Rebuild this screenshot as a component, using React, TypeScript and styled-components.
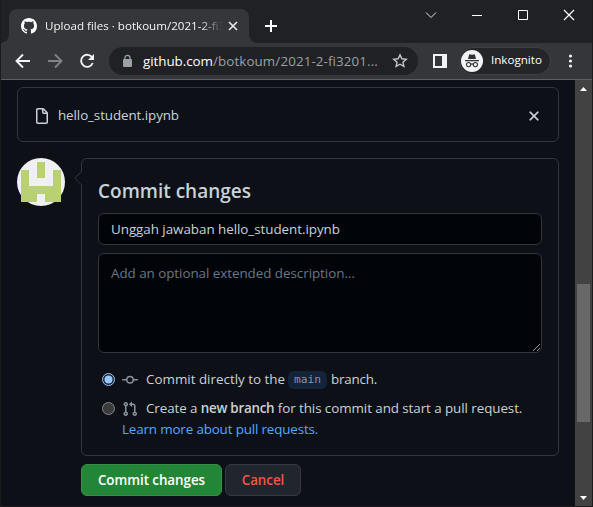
import React from 'react';
import styled, { createGlobalStyle } from 'styled-components';

const GlobalStyle = createGlobalStyle`
  *, *::before, *::after { box-sizing: border-box; }
  body { margin: 0; overflow: hidden; background: #0d1117; font-family: "Open Sans", "Noto Sans", sans-serif; }
`;

const Window = styled.div`
  width: 593px;
  height: 507px;
  display: flex;
  flex-direction: column;
  border: 1px solid #1b1b1b;
  border-top: 0;
  background: #0d1117;
  overflow: hidden;
`;

const Glyph = styled.svg`
  display: block;
  flex: none;
`;

const Label = styled.span<{ $track?: number; $bold?: boolean; $color?: string }>`
  white-space: pre;
  letter-spacing: ${p => p.$track ?? 0}px;
  font-weight: ${p => (p.$bold ? 600 : 400)};
  color: ${p => p.$color ?? 'inherit'};
`;

/* ---------- Browser chrome ---------- */

const TabStrip = styled.div`
  height: 43px;
  flex: none;
  display: flex;
  padding: 9px 0 0 8px;
  background: #202124;
`;

const Tab = styled.div`
  position: relative;
  width: 240px;
  height: 34px;
  display: flex;
  align-items: center;
  padding: 0 9px 0 12px;
  border-radius: 8px 8px 0 0;
  background: #35363a;

  &::before, &::after {
    content: '';
    position: absolute;
    bottom: 0;
    width: 8px;
    height: 8px;
  }
  &::before { left: -8px; background: radial-gradient(circle at 0 0, transparent 7.5px, #35363a 8px); }
  &::after { right: -8px; background: radial-gradient(circle at 100% 0, transparent 7.5px, #35363a 8px); }
`;

const TabTitle = styled.div`
  width: 181px;
  margin: 0 0 0 8px;
  white-space: nowrap;
  font-size: 11.6px;
  line-height: 20px;
  color: #f1f3f4;
  mask-image: linear-gradient(to right, #000 155px, transparent 178px);
`;

const NewTab = styled.div`
  margin: 11px 0 0 16px;
`;

const WindowControls = styled.div`
  display: flex;
  gap: 34px;
  margin: -1px 17px 0 auto;
`;

const Toolbar = styled.div`
  height: 37px;
  flex: none;
  display: flex;
  align-items: center;
  padding: 0 12px 0 13px;
  background: #35363a;
  border-bottom: 1px solid #5d5e61;
`;

const NavButtons = styled.div`
  display: flex;
  gap: 14px;
`;

const AddressBar = styled.div`
  width: 309px;
  height: 28px;
  margin-left: 13px;
  padding: 0 10px 0 13px;
  display: flex;
  align-items: center;
  border-radius: 14px;
  background: #202124;
`;

const Url = styled.div`
  flex: 1;
  display: flex;
  margin-left: 10px;
  font-size: 13.4px;
  line-height: 20px;
  color: #9aa0a6;
`;

const SidePanelIcon = styled(Glyph)`
  margin: 0 12px 0 15px;
`;

const IncognitoPill = styled.div`
  width: 92px;
  height: 28px;
  padding-left: 1px;
  display: flex;
  align-items: center;
  gap: 8px;
  border: 1px solid #404145;
  border-radius: 14px;
  background: #242528;
  color: #fff;
  font-size: 11.6px;
  line-height: 16px;
`;

const ProfileName = styled.div`
  padding-bottom: 2px;
`;

const MenuIcon = styled(Glyph)`
  margin-left: auto;
`;

/* ---------- Page ---------- */

const Viewport = styled.div`
  flex: 1;
  min-height: 0;
  display: flex;
  color: #c9d1d9;
  font-size: 13.4px;
`;

const Page = styled.main`
  flex: 1;
  padding: 7px 16px 0;
`;

const FileRow = styled.div`
  height: 55px;
  display: flex;
  align-items: center;
  padding: 2px 16px 0;
  border: 1px solid #30363d;
  border-radius: 6px;
`;

const FileName = styled.div`
  flex: 1;
  margin-left: 8px;
  padding-bottom: 2px;
  line-height: 20px;
`;

const CommitArea = styled.div`
  display: flex;
  gap: 16px;
  margin-top: 16px;
`;

const Column = styled.div`
  flex: 1;
`;

const Card = styled.section`
  position: relative;
  height: 298px;
  padding: 16px;
  border: 1px solid #30363d;
  border-radius: 6px;
`;

const Caret = styled(Glyph)`
  position: absolute;
  left: -8px;
  top: 11px;
`;

const Title = styled.h3`
  margin: 4px 0 10px;
  font-size: 19px;
  font-weight: 600;
  line-height: 24px;
`;

const field = `
  display: block;
  width: 100%;
  padding: 5px 12px;
  border: 1px solid #30363d;
  border-radius: 6px;
  outline: 0;
  background: #010409;
  color: #c9d1d9;
  font: 13.4px/20px "Open Sans", "Noto Sans", sans-serif;
  letter-spacing: -0.04px;
`;

const SummaryInput = styled.input`
  ${field}
  height: 32px;
`;

const DescriptionBox = styled.div`
  position: relative;
  margin-top: 8px;
`;

const Description = styled.textarea`
  ${field}
  height: 100px;
  padding-top: 9px;
  resize: none;
  &::placeholder { color: #6e7681; opacity: 1; }
`;

const ResizeGrip = styled(Glyph)`
  position: absolute;
  right: 1px;
  bottom: 1px;
`;

const Option = styled.label<{ $first?: boolean }>`
  display: flex;
  align-items: center;
  height: 20px;
  margin-top: ${p => (p.$first ? 16 : 9)}px;
  padding-left: 4px;
  line-height: 20px;
`;

const OptionIcon = styled(Glyph)`
  margin: 1px 8px 0 7px;
`;

const Branch = styled.code`
  width: 39px;
  height: 18px;
  margin: 1px 4px 0 3px;
  border-radius: 6px;
  background: #13233a;
  color: #8b949e;
  text-align: center;
  font: 11.2px/18px "DejaVu Sans Mono", monospace;
`;

const Link = styled.a`
  display: block;
  margin: 1px 0 0 24px;
  line-height: 20px;
  color: #58a6ff;
  text-decoration: none;
`;

const Actions = styled.div`
  display: flex;
  gap: 3px;
  margin-top: 8px;
`;

const Button = styled.button<{ $primary?: boolean }>`
  width: ${p => (p.$primary ? 141 : 76)}px;
  height: 32px;
  padding: 0;
  border: 1px solid ${p => (p.$primary ? '#379149' : '#363b42')};
  border-radius: 6px;
  background: ${p => (p.$primary ? '#238636' : '#21262d')};
  color: ${p => (p.$primary ? '#fff' : '#f85149')};
  font: 600 13.4px/20px "Open Sans", "Noto Sans", sans-serif;
  letter-spacing: -0.05px;
`;

const Scrollbar = styled.div`
  width: 17px;
  flex: none;
  display: flex;
  flex-direction: column;
  align-items: center;
  justify-content: space-between;
  padding: 7px 0 6px;
  background: #424242;
`;

const Thumb = styled.div`
  width: 13px;
  height: 138px;
  margin: 193px 0 auto;
  background: #686868;
`;

const MARK =
  'M8 0C3.58 0 0 3.58 0 8c0 3.54 2.29 6.53 5.47 7.59.4.07.55-.17.55-.38 0-.19-.01-.82-.01-1.49-2.01.37-2.53-.49-2.69-.94-.09-.23-.48-.94-.82-1.13-.28-.15-.68-.52-.01-.53.63-.01 1.08.58 1.23.82.72 1.21 1.87.87 2.33.66.07-.52.28-.87.51-1.07-1.78-.2-3.64-.89-3.64-3.95 0-.87.31-1.59.82-2.15-.08-.2-.36-1.02.08-2.12 0 0 .67-.21 2.2.82.64-.18 1.32-.27 2-.27s1.36.09 2 .27c1.53-1.04 2.2-.82 2.2-.82.44 1.1.16 1.92.08 2.12.51.56.82 1.27.82 2.15 0 3.07-1.87 3.75-3.65 3.95.29.25.54.73.54 1.48 0 1.07-.01 1.93-.01 2.2 0 .21.15.46.55.38A8.01 8.01 0 0 0 16 8c0-4.42-3.58-8-8-8z';
const FILE =
  'M3.75 1.5a.25.25 0 00-.25.25v12.5c0 .138.112.25.25.25h8.5a.25.25 0 00.25-.25V6H9.75A1.75 1.75 0 018 4.25V1.5H3.75zm5.75.56v2.19c0 .138.112.25.25.25h2.19L9.5 2.06zM2 1.75C2 .784 2.784 0 3.75 0h5.086c.464 0 .909.184 1.237.513l3.414 3.414c.329.328.513.773.513 1.237v9.086A1.75 1.75 0 0112.25 16h-8.5A1.75 1.75 0 012 14.25V1.75z';
const CROSS =
  'M3.72 3.72a.75.75 0 011.06 0L8 6.94l3.22-3.22a.75.75 0 111.06 1.06L9.06 8l3.22 3.22a.75.75 0 11-1.06 1.06L8 9.06l-3.22 3.22a.75.75 0 01-1.06-1.06L6.94 8 3.72 4.78a.75.75 0 010-1.06z';
const COMMIT =
  'M10.5 7.75a2.5 2.5 0 11-5 0 2.5 2.5 0 015 0zm1.43.75a4.002 4.002 0 01-7.86 0H.75a.75.75 0 110-1.5h3.32a4.001 4.001 0 017.86 0h3.32a.75.75 0 110 1.5h-3.32z';
const PULL =
  'M7.177 3.073L9.573.677A.25.25 0 0110 .854v4.792a.25.25 0 01-.427.177L7.177 3.427a.25.25 0 010-.354zM3.75 2.5a.75.75 0 100 1.5.75.75 0 000-1.5zm-2.25.75a2.25 2.25 0 113 2.122v5.256a2.251 2.251 0 11-1.5 0V5.372A2.25 2.25 0 011.5 3.25zM11 2.5h-1V4h1a1 1 0 011 1v5.628a2.251 2.251 0 101.5 0V5A2.5 2.5 0 0011 2.5zm1 10.25a.75.75 0 111.5 0 .75.75 0 01-1.5 0zM3.75 12a.75.75 0 100 1.5.75.75 0 000-1.5z';

const Radio = ({ on }: { on?: boolean }) => (
  <Glyph width="13" height="13" viewBox="0 0 13 13" role="radio" aria-checked={!!on}>
    <circle cx="6.5" cy="6.5" r="6" fill={on ? '#1b2430' : '#3b3b3b'} stroke={on ? '#99c8ff' : '#858585'} />
    {on && <circle cx="6.5" cy="6.5" r="4" fill="#99c8ff" />}
  </Glyph>
);

const Avatar = () => (
  <Glyph width="48" height="48" viewBox="0 0 48 48">
    <circle cx="24" cy="24" r="24" fill="#f0f0f0" />
    <path fill="#b9d174" d="M20 4h8v16h-8zM4 12h8v16h24V12h8v32H28v-8h-8v8H4z" />
  </Glyph>
);

const Incognito = () => (
  <Glyph width="22" height="22" viewBox="0 0 22 22">
    <circle cx="11" cy="11" r="11" fill="#f1f3f4" />
    <path fill="#303134" d="M7 9l1-4q.4-1 1.300-.6L11 4.800l1.700-.4q.9-.4 1.300.6l1 4zM4 10h14v1.200H4z" />
    <g fill="none" stroke="#303134" strokeWidth="1.100">
      <circle cx="7.600" cy="14.600" r="2.100" />
      <circle cx="14.400" cy="14.600" r="2.100" />
      <path d="M9.700 14.300q1.300-.8 2.600 0" />
    </g>
  </Glyph>
);

export default function App() {
  return (
    <>
      <GlobalStyle />
      <Window>
        <TabStrip>
          <Tab>
            <Glyph width="16" height="16" viewBox="0 0 16 16" fill="#fff"><path d={MARK} /></Glyph>
            <TabTitle>Upload files · botkoum/2021-2-fi3</TabTitle>
            <Glyph width="14" height="14" viewBox="0 0 14 14" stroke="#e8eaed" strokeWidth="1.600">
              <path d="M3 3l8 8M11 3l-8 8" />
            </Glyph>
          </Tab>
          <NewTab>
            <Glyph width="12" height="12" viewBox="0 0 12 12" stroke="#fff" strokeWidth="2"><path d="M6 0v12M0 6h12" /></Glyph>
          </NewTab>
          <WindowControls>
            <Glyph width="12" height="14" viewBox="0 0 12 14" fill="none" stroke="#e0e0e0"><path d="M1 4.500l5 5 5-5" /></Glyph>
            <Glyph width="12" height="14" viewBox="0 0 12 14" stroke="#fff"><path d="M1 7.500h10" /></Glyph>
            <Glyph width="12" height="14" viewBox="0 0 12 14" fill="none" stroke="#fff"><path d="M1.500 2.500h9v9h-9z" /></Glyph>
            <Glyph width="12" height="14" viewBox="0 0 12 14" stroke="#fff" strokeWidth="1.200"><path d="M1 2l10 10M11 2L1 12" /></Glyph>
          </WindowControls>
        </TabStrip>

        <Toolbar>
          <NavButtons>
            <Glyph width="18" height="18" viewBox="0 0 18 18" fill="none" stroke="#f1f3f4" strokeWidth="1.900"><path d="M16 9H3M9 2.500L2.500 9 9 15.500" /></Glyph>
            <Glyph width="18" height="18" viewBox="0 0 18 18" fill="none" stroke="#818286" strokeWidth="1.900"><path d="M2 9h13M9 2.500L15.500 9 9 15.500" /></Glyph>
            <Glyph width="18" height="18" viewBox="0 0 18 18" fill="none" stroke="#f1f3f4" strokeWidth="1.900">
              <path d="M14.300 5.800A6 6 0 1 0 14.700 11" />
              <path d="M16 2v6h-6z" fill="#f1f3f4" stroke="none" />
            </Glyph>
          </NavButtons>
          <AddressBar>
            <Glyph width="11" height="14" viewBox="0 0 11 14">
              <path d="M3 6V3.800a2.500 2.500 0 0 1 5 0V6" fill="none" stroke="#9aa0a6" strokeWidth="1.300" />
              <rect x="1" y="5" width="9" height="8" rx="1" fill="#9aa0a6" />
            </Glyph>
            <Url>
              <Label $track={-0.05} $color="#fff">github.com</Label>
              <Label $track={0.1}>/botkoum/2021-2-fi3201...</Label>
            </Url>
            <Glyph width="16" height="16" viewBox="0 0 16 16" fill="none" stroke="#c4c7cb" strokeWidth="1.400">
              <path d="M8 1.800l1.850 4 4.400.45-3.300 2.900.95 4.300L8 11.200l-3.900 2.250.95-4.300-3.300-2.900 4.400-.45z" />
            </Glyph>
          </AddressBar>
          <SidePanelIcon width="14" height="14" viewBox="0 0 14 14">
            <path fill="#f1f3f4" fillRule="evenodd" d="M0 0h14v14H0zM2 2v10h7V2z" />
          </SidePanelIcon>
          <IncognitoPill>
            <Incognito />
            <ProfileName>Inkognito</ProfileName>
          </IncognitoPill>
          <MenuIcon width="18" height="14" viewBox="0 0 18 14" fill="#f1f3f4">
            <circle cx="8.500" cy="2" r="1.600" /><circle cx="8.500" cy="7" r="1.600" /><circle cx="8.500" cy="12" r="1.600" />
          </MenuIcon>
        </Toolbar>

        <Viewport>
          <Page>
            <FileRow>
              <Glyph width="16" height="16" viewBox="0 0 16 16" fill="#c9d1d9"><path d={FILE} /></Glyph>
              <FileName><Label $track={-0.09}>hello_student.ipynb</Label></FileName>
              <Glyph width="16" height="16" viewBox="0 0 16 16" fill="#c9d1d9" stroke="#c9d1d9" strokeWidth=".3"><path d={CROSS} /></Glyph>
            </FileRow>

            <CommitArea>
              <Avatar />
              <Column>
                <Card>
                  <Caret width="8" height="16" viewBox="0 0 8 16">
                    <path d="M8 1.500L.8 8.200 8 15" fill="#0d1117" />
                    <path d="M7.500 1.500L.8 8.200l6.700 6.700" fill="#0d1117" stroke="#30363d" />
                  </Caret>
                  <Title>Commit changes</Title>
                  <SummaryInput defaultValue="Unggah jawaban hello_student.ipynb" />
                  <DescriptionBox>
                    <Description placeholder="Add an optional extended description…" />
                    <ResizeGrip width="9" height="9" viewBox="0 0 9 9" stroke="#a8a8a8" strokeWidth=".9">
                      <path d="M1 8l7-7M5 8l3-3" />
                    </ResizeGrip>
                  </DescriptionBox>
                  <Option $first>
                    <Radio on />
                    <OptionIcon width="16" height="16" viewBox="0 0 16 16" fill="#8b949e"><path fillRule="evenodd" d={COMMIT} /></OptionIcon>
                    <Label>Commit directly to the</Label>
                    <Branch>main</Branch>
                    <Label $track={-0.2}>branch.</Label>
                  </Option>
                  <Option>
                    <Radio />
                    <OptionIcon width="16" height="16" viewBox="0 0 16 16" fill="#8b949e"><path fillRule="evenodd" d={PULL} /></OptionIcon>
                    <Label $track={-0.1}>Create a </Label>
                    <Label $track={-0.25} $bold>new branch</Label>
                    <Label $track={-0.07}> for this commit and start a pull request.</Label>
                  </Option>
                  <Link><Label $track={-0.15}>Learn more about pull requests.</Label></Link>
                </Card>
                <Actions>
                  <Button $primary>Commit changes</Button>
                  <Button>Cancel</Button>
                </Actions>
              </Column>
            </CommitArea>
          </Page>
          <Scrollbar>
            <Glyph width="7" height="4" viewBox="0 0 7 4" fill="#fff"><path d="M3.500 0L7 4H0z" /></Glyph>
            <Thumb />
            <Glyph width="7" height="4" viewBox="0 0 7 4" fill="#fff"><path d="M0 0h7L3.500 4z" /></Glyph>
          </Scrollbar>
        </Viewport>
      </Window>
    </>
  );
}
